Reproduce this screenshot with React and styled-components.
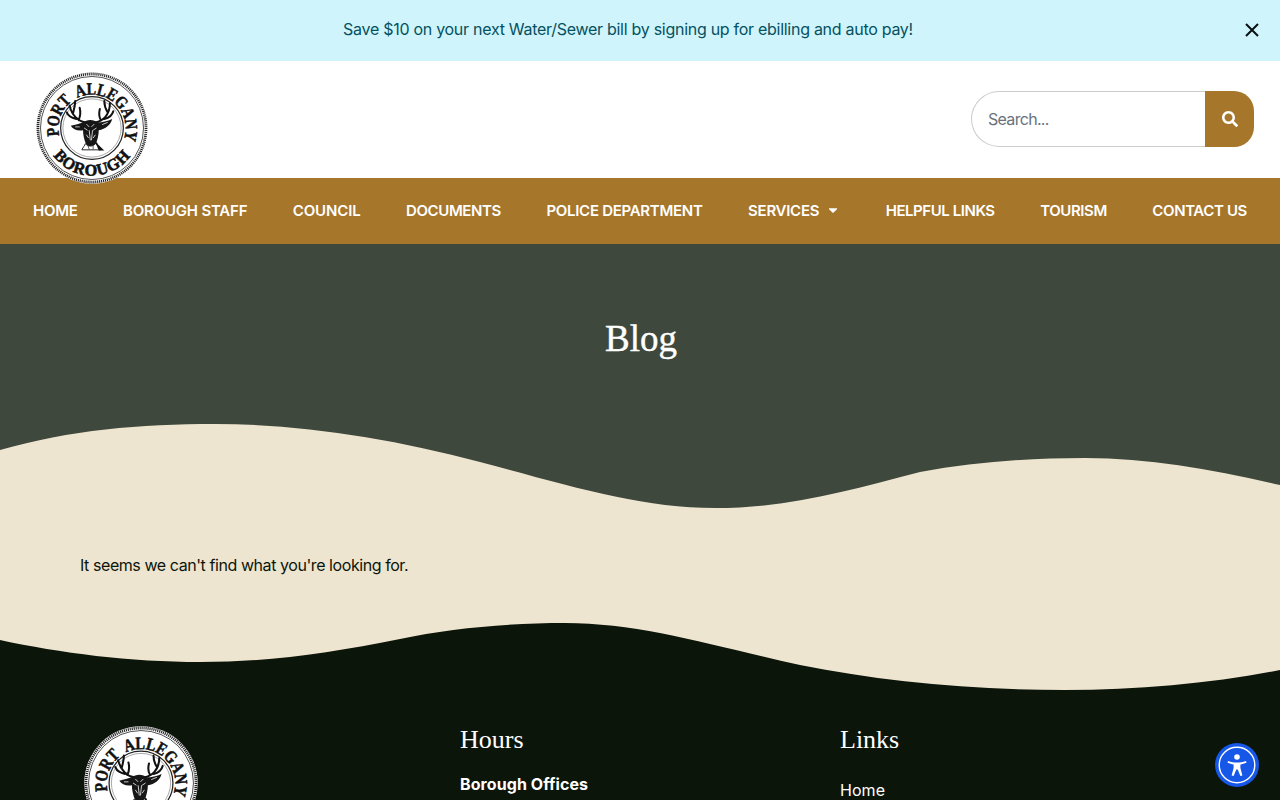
import * as React from "react";
import styled, { createGlobalStyle } from "styled-components";
import { FaSearch, FaCaretDown } from "react-icons/fa";

const sans = `"Inter", "Noto Sans", sans-serif`;
const serif = `"Liberation Serif", "DejaVu Serif", serif`;

const GlobalStyle = createGlobalStyle`
    html, body {
        margin: 0;
        height: 800px;
        overflow: hidden;
        font-family: ${sans};
    }
`;

const Banner = styled.div`
    position: relative;
    height: 61px;
    display: flex;
    align-items: center;
    justify-content: center;
    padding: 0 24px 4px 0;
    box-sizing: border-box;
    background: #cff4fc;
    color: #055160;
    font-size: 16px;
    letter-spacing: -0.28px;
`;

const CloseButton = styled.button`
    position: absolute;
    right: 20px;
    top: 22px;
    width: 16px;
    height: 16px;
    padding: 0;
    border: none;
    background: none;
`;

const Header = styled.header`
    height: 117px;
    display: flex;
    align-items: flex-start;
    justify-content: space-between;
    padding: 11px 26px 0 36px;
    box-sizing: border-box;
    background: #fff;
`;

const SearchForm = styled.form`
    display: flex;
    width: 283px;
    height: 56px;
    margin-top: 19px;
`;

const SearchInput = styled.div`
    flex: 1;
    display: flex;
    align-items: center;
    padding-left: 16px;
    border: 1px solid #ccc;
    border-right: none;
    border-radius: 28px 0 0 28px;
    color: #69727d;
    font-size: 16px;
    letter-spacing: -0.7px;
`;

const SearchButton = styled.div`
    width: 49px;
    display: flex;
    align-items: center;
    justify-content: center;
    border-radius: 0 20px 20px 0;
    background: #a6762b;
    color: #fff;
    font-size: 16px;
`;

const Nav = styled.nav`
    position: relative;
    height: 66px;
    display: flex;
    align-items: center;
    justify-content: space-between;
    padding: 0 33px 2px;
    box-sizing: border-box;
    background: #a6762b;
`;

const NavLink = styled.a`
    display: flex;
    align-items: center;
    gap: 7px;
    color: #fff;
    font-size: 15px;
    font-weight: 600;
    letter-spacing: ${({ $track }) => $track ?? -0.28}px;
    white-space: nowrap;
`;

const Hero = styled.section`
    background: #3f483d;
`;

const HeroTitle = styled.h1`
    margin: 0;
    padding: 67px 0 0 2px;
    height: 109px;
    box-sizing: content-box;
    text-align: center;
    color: #fff;
    font-family: ${serif};
    font-size: 37px;
    line-height: 56px;
    font-weight: 400;
    -webkit-text-stroke: 0.4px #fff;
`;

const Wave = styled.svg`
    display: block;
    width: 100%;
`;

const Main = styled.main`
    height: 115px;
    padding: 45px 80px 0;
    box-sizing: border-box;
    background: #eee5d0;
    color: #0c150a;
    font-size: 16px;
    line-height: 24px;
    letter-spacing: -0.43px;
`;

const Footer = styled.footer`
    background: #0c150a;
    color: #fff;
`;

const FooterGrid = styled.div`
    display: grid;
    grid-template-columns: 376px 380px 1fr;
    padding: 36px 84px 0;
`;

const FooterTitle = styled.h3`
    margin: 0 0 19px;
    font-family: ${serif};
    font-size: 26px;
    line-height: 27px;
    font-weight: 400;
`;

const FooterStrong = styled.div`
    font-size: 16px;
    font-weight: 700;
    line-height: 24px;
    letter-spacing: 0.08px;
`;

const FooterLink = styled.a`
    display: block;
    padding-top: 6px;
    font-size: 16px;
    line-height: 24px;
    letter-spacing: 0.05px;
`;

const A11yButton = styled.div`
    position: fixed;
    left: 1215px;
    top: 743px;
    width: 44px;
    height: 44px;
    display: flex;
    align-items: center;
    justify-content: center;
    border-radius: 50%;
    background: #1657e8;
`;

// deer head + rope ring, used in the header and in the footer
const Logo = ({ size, id }) => (
    <svg width={size} height={size} viewBox="0 0 200 200" style={{ display: "block" }}>
        <defs>
            <path id={`${id}-top`} d="M 42 116 A 60 60 0 1 1 158 116" />
            <path id={`${id}-bottom`} d="M 24 138 A 85 85 0 0 0 176 138" />
        </defs>
        <circle cx="100" cy="100" r="99.5" fill="#fff" />
        <circle cx="100" cy="100" r="96.5" fill="none" stroke="#222" strokeWidth="5" strokeDasharray="2 1.5" />
        <circle cx="100" cy="100" r="92" fill="none" stroke="#222" strokeWidth="1.4" />
        <circle cx="100" cy="100" r="56" fill="none" stroke="#222" strokeWidth="2.2" />
        <circle cx="100" cy="100" r="52" fill="none" stroke="#666" strokeWidth="1" />
        <text fontFamily="Liberation Serif" fontWeight="700" fontSize="31" fill="#111" stroke="#111" strokeWidth="1" wordSpacing="8">
            <textPath href={`#${id}-top`} startOffset="1%" textLength="222" lengthAdjust="spacingAndGlyphs">PORT ALLEGANY</textPath>
        </text>
        <text fontFamily="Liberation Serif" fontWeight="700" fontSize="29" fill="#111" stroke="#111" strokeWidth="1" letterSpacing="1.5" textAnchor="middle">
            <textPath href={`#${id}-bottom`} startOffset="50%">BOROUGH</textPath>
        </text>
        <g fill="none" stroke="#111" strokeWidth="3.6" strokeLinecap="round">
            <path d="M88 90 C76 88 64 78 60 60 M72 84 C64 82 58 80 55 72 M66 74 C68 66 70 60 70 52 M76 86 C80 78 80 72 78 64" />
            <path d="M106 90 C118 88 132 78 132 56 M122 84 C130 82 136 78 138 70 M128 72 C124 66 122 60 122 52 M116 86 C112 80 112 74 114 66" />
        </g>
        <path
            d="M84 90 C90 84 104 84 110 90 C118 90 128 88 136 84 C134 94 124 102 112 104 C112 112 110 122 106 130 C102 134 94 134 90 130 C86 122 84 112 84 104 C74 106 66 102 62 96 C70 94 78 92 84 90 Z"
            fill="#161616"
        />
        <path
            d="M90 93 L95 98 M104 93 L99 98 M86 100 L92 104 M108 100 L102 104 M95 104 L97 122 M101 104 L99 122 M90 112 L94 118 M106 112 L102 118 M118 94 L128 90 M78 98 L70 98"
            stroke="#e8e8e8"
            strokeWidth="1.5"
            fill="none"
        />
        <path d="M88 128 C87 132 84 134 82 139 L116 139 C112 134 110 130 108 126 C102 134 94 134 88 128 Z" fill="#fff" stroke="#111" strokeWidth="1.6" />
        <path d="M108 126 C112 132 118 136 122 140 L112 140 C110 134 108 130 106 128 Z" fill="#111" />
        <path d="M93 132 L95 138 M102 132 L102 138" stroke="#111" strokeWidth="1.2" />
    </svg>
);

const LogoLink = styled.a`
    position: relative;
    z-index: 1;
    display: block;
`;

const App = () => (
    <>
        <GlobalStyle />
        <Banner>
            Save $10 on your next Water/Sewer bill by signing up for ebilling and auto pay!
            <CloseButton aria-label="Close">
                <svg width="16" height="16" viewBox="0 0 16 16">
                    <path d="M2 2 L14 14 M14 2 L2 14" stroke="#0b0f12" strokeWidth="2" />
                </svg>
            </CloseButton>
        </Banner>
        <Header>
            <LogoLink>
                <Logo size={112} id="head" />
            </LogoLink>
            <SearchForm>
                <SearchInput>Search...</SearchInput>
                <SearchButton><FaSearch /></SearchButton>
            </SearchForm>
        </Header>
        <Nav>
            <NavLink>HOME</NavLink>
            <NavLink $track={-0.2}>BOROUGH STAFF</NavLink>
            <NavLink $track={-0.14}>COUNCIL</NavLink>
            <NavLink $track={-0.4}>DOCUMENTS</NavLink>
            <NavLink>POLICE DEPARTMENT</NavLink>
            <NavLink>SERVICES <FaCaretDown size={14} /></NavLink>
            <NavLink $track={-0.44}>HELPFUL LINKS</NavLink>
            <NavLink $track={-0.42}>TOURISM</NavLink>
            <NavLink $track={-0.38}>CONTACT US</NavLink>
        </Nav>
        <Hero>
            <HeroTitle>Blog</HeroTitle>
            <Wave viewBox="0 0 1280 88" height="88">
                <path
                    d="M0 30 C70 10 140 4 215 4 C300 4 390 18 480 42 C570 66 640 88 715 88 C790 88 850 70 920 52 C975 42 1030 38 1085 38 C1150 38 1215 50 1280 65 L1280 88 L0 88 Z"
                    fill="#eee5d0"
                />
            </Wave>
        </Hero>
        <Main>It seems we can't find what you're looking for.</Main>
        <Footer>
            <Wave viewBox="0 0 1280 67" height="67">
                <rect width="1280" height="67" fill="#eee5d0" />
                <path
                    d="M0 17 C60 30 130 39 200 39 C270 39 330 30 400 16 C450 5 510 0 565 0 C640 0 710 22 800 42 C880 58 970 67 1065 67 C1140 67 1215 60 1280 47 L1280 67 L0 67 Z"
                    fill="#0c150a"
                />
            </Wave>
            <FooterGrid>
                <Logo size={114} id="foot" />
                <div>
                    <FooterTitle>Hours</FooterTitle>
                    <FooterStrong>Borough Offices</FooterStrong>
                </div>
                <div>
                    <FooterTitle>Links</FooterTitle>
                    <FooterLink>Home</FooterLink>
                </div>
            </FooterGrid>
        </Footer>
        <A11yButton>
            <svg width="38" height="38" viewBox="0 0 38 38">
                <circle cx="19" cy="19" r="17.8" fill="none" stroke="#fff" strokeWidth="1.4" />
                <circle cx="19" cy="11" r="2.8" fill="#fff" />
                <path
                    d="M10 15 C13.5 16.2 16 16.6 19 16.6 C22 16.6 24.5 16.2 28 15 L28.5 16.8 C26.2 17.7 24.4 18.2 22.4 18.5 L22.4 22 L24.4 29.4 L22.4 29.9 L19.7 23.4 L18.3 23.4 L15.6 29.9 L13.6 29.4 L15.6 22 L15.6 18.5 C13.6 18.2 11.8 17.7 9.5 16.8 Z"
                    fill="#fff"
                />
            </svg>
        </A11yButton>
    </>
);

export default App;
